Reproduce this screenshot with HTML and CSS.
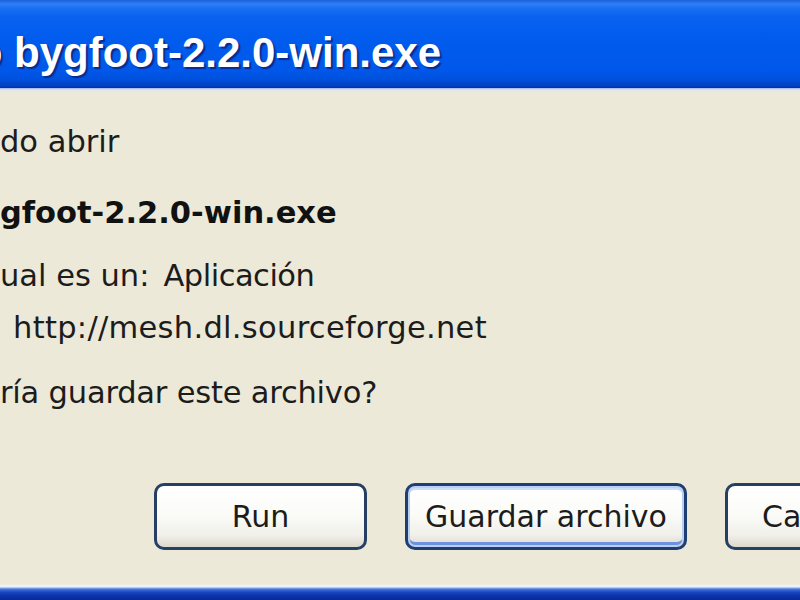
FILE: index.html
```html
<!DOCTYPE html>
<html lang="es">
<head>
<meta charset="utf-8">
<title>Abriendo bygfoot-2.2.0-win.exe</title>
<link rel="stylesheet" href="styles.css">
</head>
<body>
<div class="dialog">
  <div class="titlebar"><span class="title"><span class="title-cut">Abriendo </span>bygfoot-2.2.0-win.exe</span></div>
  <div class="titlebar-edge"></div>
  <div class="content">
    <div class="line l1">do abrir</div>
    <div class="line l2 bold">gfoot-2.2.0-win.exe</div>
    <div class="line l3"><span>ual es un:</span><span class="value">Aplicación</span></div>
    <div class="line l4">http://mesh.dl.sourceforge.net</div>
    <div class="line l5">ría guardar este archivo?</div>
  </div>
  <div class="buttons">
    <button class="btn btn-run">Run</button>
    <button class="btn btn-save focused">Guardar archivo</button>
    <button class="btn btn-cancel">Ca</button>
  </div>
  <div class="bottom-edge"></div>
</div>
</body>
</html>
```
FILE: styles.css
```css
html, body {
  margin: 0;
  padding: 0;
  width: 800px;
  height: 600px;
  overflow: hidden;
  background: #ece9d8;
}

.dialog {
  display: flex;
  flex-direction: column;
  height: 600px;
  font-family: "DejaVu Sans", "Noto Sans", sans-serif;
  color: #1c1c1c;
}

.titlebar {
  box-sizing: border-box;
  height: 88px;
  padding: 29px 0 0 14px;
  overflow: hidden;
  white-space: nowrap;
  background: linear-gradient(to bottom,
    #1862dc 0px, #2f80f2 4px, #1a70f4 8px, #0a62f0 16px,
    #005cee 40px, #0058ea 70px, #004fdc 80px, #0040c0 86px, #003294 88px);
}

.title {
  font-family: "Liberation Sans", Arial, sans-serif;
  font-weight: bold;
  font-size: 42px;
  line-height: 47px;
  color: #ffffff;
  text-shadow: 2px 2px 1px #0a2c8e;
}

.title-cut {
  margin-left: -196px;
}

.titlebar-edge {
  height: 4px;
  background: linear-gradient(to bottom, #9fb6e8 0px, #dfe5f4 2px, #ece9d8 4px);
}

.content {
  padding-top: 32px;
}

.line {
  font-size: 30.5px;
  line-height: 36px;
  white-space: nowrap;
}

.bold {
  font-weight: bold;
  color: #111;
}

.l1 { margin-bottom: 35px; }
.l2 { margin-bottom: 27px; }
.l3 {
  display: flex;
  gap: 14px;
  margin-bottom: 16px;
}
.l3 .value {
  letter-spacing: -0.5px;
}
.l4 {
  padding-left: 13px;
  margin-bottom: 29px;
  letter-spacing: 0.3px;
}
.l5 {
  letter-spacing: -0.2px;
}

.buttons {
  display: flex;
  gap: 38px;
  padding-left: 154px;
  margin-top: 72px;
  white-space: nowrap;
}

.btn {
  box-sizing: border-box;
  flex: none;
  height: 67px;
  padding: 0 0 0 0;
  border: 3px solid #263f62;
  border-radius: 10px;
  background: linear-gradient(to bottom, #ffffff 0%, #fbfbf8 45%, #f1f0ea 80%, #dcd8cc 100%);
  font-family: "DejaVu Sans", "Noto Sans", sans-serif;
  font-size: 30px;
  color: #1c1c1c;
  text-align: center;
  overflow: hidden;
}

.btn-run { width: 213px; }
.btn-save { width: 282px; }
.btn-cancel {
  width: 213px;
  text-align: left;
  padding-left: 34px;
}

.focused {
  border-color: #1f3e72;
  box-shadow: inset 0 0 0 2px #b9cff4, inset 0 -4px 0 1px #6e92dc, inset 0 3px 0 1px #cddcf8;
}

.bottom-edge {
  margin-top: auto;
  height: 16px;
  background: linear-gradient(to bottom,
    #ece9d8 0px, #f3f6fc 2px, #dde6f8 3px, #4a78dc 5px, #1a48c0 8px, #0a34a8 12px, #08289a 16px);
}
```
